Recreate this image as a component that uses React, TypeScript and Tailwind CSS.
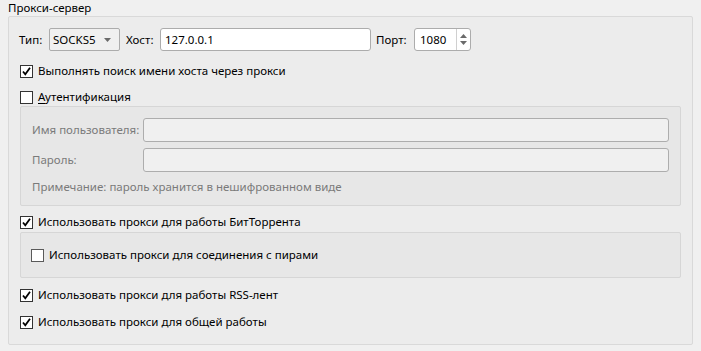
import React from "react"

function Check({ checked, light }: { checked?: boolean; light?: boolean }) {
  return (
    <span
      className={`w-[13px] h-[13px] shrink-0 bg-white border flex items-center justify-center ${
        light ? "border-[#5a5a5a]" : "border-[#333333]"
      }`}
    >
      {checked && (
        <svg width="11" height="11" viewBox="0 0 11 11">
          <path d="M2 5.5 L4.3 8.3 L9 1.8" fill="none" stroke="#000" strokeWidth="1.8" />
        </svg>
      )}
    </span>
  )
}

function CheckRow({ label, checked, className = "" }: { label: React.ReactNode; checked?: boolean; className?: string }) {
  return (
    <div className={`flex items-center h-[20px] gap-[5px] ${className}`}>
      <Check checked={checked} />
      <span>{label}</span>
    </div>
  )
}

export default function App() {
  return (
    <div className="w-[701px] h-[351px] bg-[#f0f0f0] text-[11.5px] text-black overflow-hidden font-['Noto_Sans',sans-serif]">
      <div className="pl-2 h-4 leading-[16px]">Прокси-сервер</div>

      <div className="ml-2 w-[685px] h-[329px] border border-[#d9d9d9] rounded-[2px] bg-[#ececec] pt-[11px] px-[11px]">
        {/* тип / хост / порт */}
        <div className="flex items-center h-[23px] -ml-[1px]">
          <span className="w-[30px]">Тип:</span>
          <div className="w-[71px] h-[23px] border border-[#acacac] rounded-[2px] bg-[#f0f0f0] flex items-center pl-[3px] pr-[8px] justify-between">
            <span>SOCKS5</span>
            <svg width="7" height="4" viewBox="0 0 7 4">
              <path d="M0 0 L7 0 L3.5 4 Z" fill="#6a6a6a" />
            </svg>
          </div>
          <span className="w-[34px] ml-[6px]">Хост:</span>
          <div className="w-[211px] h-[23px] border border-[#acacac] rounded-[3px] bg-white flex items-center pl-[4px]">
            127.0.0.1
          </div>
          <span className="w-[38px] ml-[5px]">Порт:</span>
          <div className="w-[57px] h-[23px] border border-[#acacac] rounded-[3px] bg-white flex items-center">
            <span className="flex-1 pl-[5px]">1080</span>
            <div className="w-[14px] h-full border-l border-[#d0d0d0] flex flex-col items-center justify-center gap-[3px]">
              <svg width="7" height="4" viewBox="0 0 7 4">
                <path d="M0 4 L7 4 L3.5 0 Z" fill="#6a6a6a" />
              </svg>
              <svg width="7" height="4" viewBox="0 0 7 4">
                <path d="M0 0 L7 0 L3.5 4 Z" fill="#6a6a6a" />
              </svg>
            </div>
          </div>
        </div>

        <CheckRow className="mt-[10px]" checked label="Выполнять поиск имени хоста через прокси" />
        <div className="flex items-center h-[18px] gap-[5px] mt-[7px]">
          <Check />
          <span>
            <span className="underline underline-offset-2">А</span>утентификация
          </span>
        </div>

        {/* аутентификация */}
        <div className="h-[100px] border border-[#d6d6d6] rounded-[2px] bg-[#e7e7e7] pt-[11px] px-[11px] text-[#7a7a7a]">
          <div className="flex items-center h-[24px]">
            <span className="w-[111px] shrink-0">Имя пользователя:</span>
            <div className="flex-1 h-full border border-[#adadad] rounded-[3px] bg-[#f0f0f0]" />
          </div>
          <div className="flex items-center h-[24px] mt-[6px]">
            <span className="w-[111px] shrink-0">Пароль:</span>
            <div className="flex-1 h-full border border-[#adadad] rounded-[3px] bg-[#f0f0f0]" />
          </div>
          <div className="flex items-center h-[22px] mt-[4px]">Примечание: пароль хранится в нешифрованном виде</div>
        </div>

        <CheckRow className="mt-[6px]" checked label="Использовать прокси для работы БитТоррента" />
        <div className="h-[46px] border border-[#d6d6d6] rounded-[2px] bg-[#e7e7e7] pl-[10px] flex items-center gap-[5px]">
          <Check light />
          <span>Использовать прокси для соединения с пирами</span>
        </div>

        <CheckRow className="mt-[7px]" checked label="Использовать прокси для работы RSS-лент" />
        <CheckRow className="mt-[7px]" checked label="Использовать прокси для общей работы" />
      </div>
    </div>
  )
}
